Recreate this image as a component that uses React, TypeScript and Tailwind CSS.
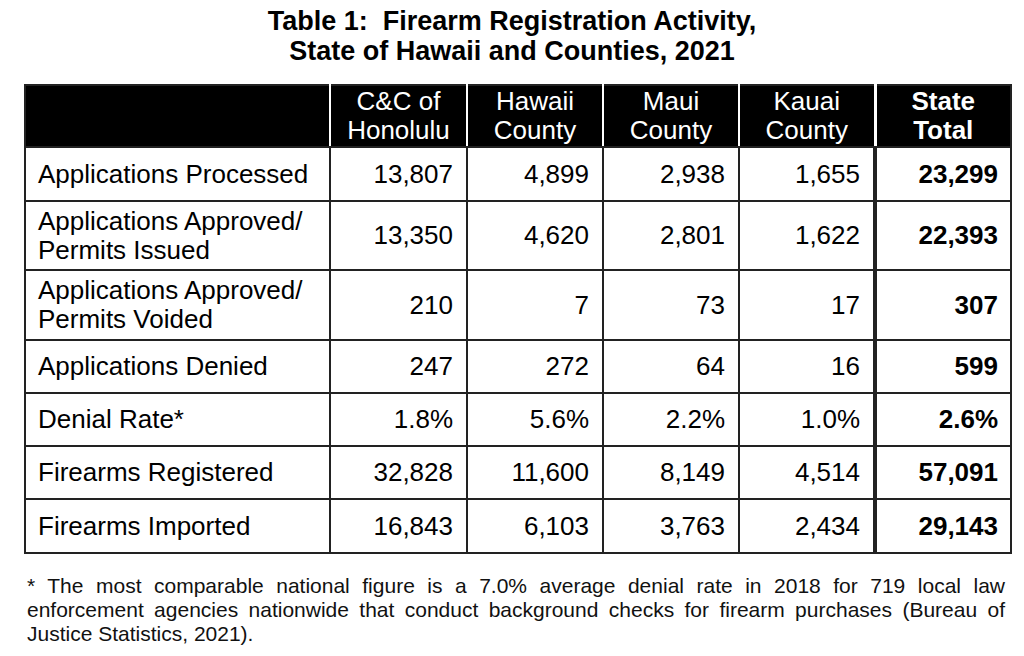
const rows = [
  { label: ["Applications Processed"], values: ["13,807", "4,899", "2,938", "1,655"], total: "23,299", h: "h-[54px]" },
  { label: ["Applications Approved/", "Permits Issued"], values: ["13,350", "4,620", "2,801", "1,622"], total: "22,393", h: "h-[69px]" },
  { label: ["Applications Approved/", "Permits Voided"], values: ["210", "7", "73", "17"], total: "307", h: "h-[70px]" },
  { label: ["Applications Denied"], values: ["247", "272", "64", "16"], total: "599", h: "h-[53px]" },
  { label: ["Denial Rate*"], values: ["1.8%", "5.6%", "2.2%", "1.0%"], total: "2.6%", h: "h-[53px]" },
  { label: ["Firearms Registered"], values: ["32,828", "11,600", "8,149", "4,514"], total: "57,091", h: "h-[53px]" },
  { label: ["Firearms Imported"], values: ["16,843", "6,103", "3,763", "2,434"], total: "29,143", h: "h-[54px]" },
]

const counties = [
  ["C&C of", "Honolulu"],
  ["Hawaii", "County"],
  ["Maui", "County"],
  ["Kauai", "County"],
]

export default function App() {
  return (
    <div className="w-[1024px] h-[656px] bg-white text-black font-['Liberation_Sans',Arial,sans-serif] overflow-hidden">
      <h1 className="pt-[6px] text-center text-[27px] font-bold leading-[30px]">
        Table 1:&nbsp; Firearm Registration Activity,
        <br />
        State of Hawaii and Counties, 2021
      </h1>

      <table className="mt-[18px] ml-[24px] table-fixed border-collapse text-[26px] leading-[29px]">
        <colgroup>
          <col className="w-[305px]" />
          <col className="w-[137px]" />
          <col className="w-[136px]" />
          <col className="w-[136px]" />
          <col className="w-[136px]" />
          <col className="w-[136px]" />
        </colgroup>
        <thead>
          <tr className="h-[62px] bg-black text-white">
            <th className="border-2 border-[#222] border-r-white"></th>
            {counties.map((c, i) => (
              <th
                key={i}
                className={
                  i === 3
                    ? "border-2 border-[#222] border-r-[3px] border-r-white font-normal text-center"
                    : "border-2 border-[#222] border-r-white font-normal text-center"
                }
              >
                {c[0]}
                <br />
                {c[1]}
              </th>
            ))}
            <th className="border-2 border-[#222] text-center font-bold">
              State
              <br />
              Total
            </th>
          </tr>
        </thead>
        <tbody>
          {rows.map((r, i) => (
            <tr key={i} className={r.h}>
              <td className="border-2 border-[#222] pl-[12px] text-left align-middle">
                {r.label.map((l, j) => (
                  <div key={j}>{l}</div>
                ))}
              </td>
              {r.values.map((v, j) => (
                <td
                  key={j}
                  className={
                    j === 3
                      ? "border-2 border-r-[4px] border-[#222] pr-[13px] text-right"
                      : "border-2 border-[#222] pr-[13px] text-right"
                  }
                >
                  {v}
                </td>
              ))}
              <td className="border-2 border-[#222] pr-[12px] text-right font-bold">{r.total}</td>
            </tr>
          ))}
        </tbody>
      </table>

      <div className="mt-[20px] ml-[27px] w-[978px] text-[21px] leading-[24px] text-[#111]">
        <p className="text-justify [text-align-last:justify]">
          * The most comparable national figure is a 7.0% average denial rate in 2018 for 719 local law
        </p>
        <p className="text-justify [text-align-last:justify]">
          enforcement agencies nationwide that conduct background checks for firearm purchases (Bureau of
        </p>
        <p>Justice Statistics, 2021).</p>
      </div>
    </div>
  )
}
